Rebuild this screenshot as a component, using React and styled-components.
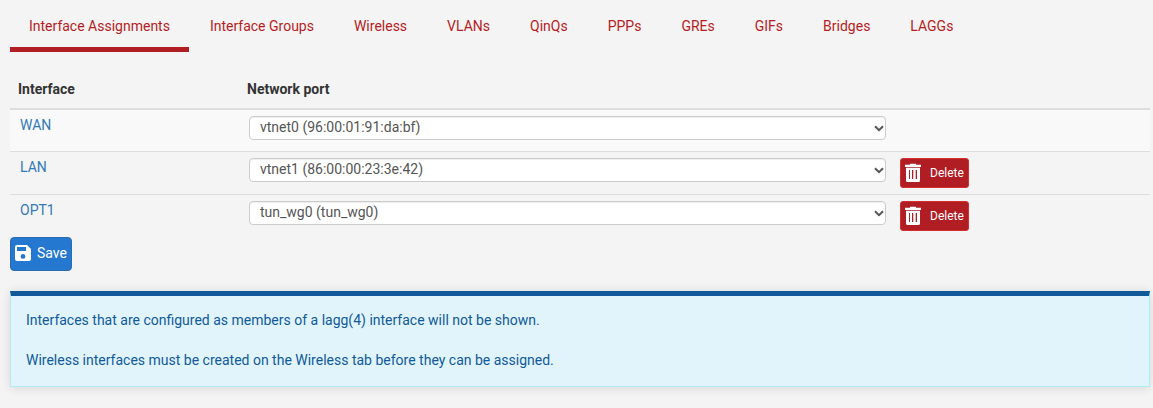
import React from 'react';
import styled, { createGlobalStyle } from 'styled-components';

const Global = createGlobalStyle`
  *, *::before, *::after { box-sizing: border-box; }
  body {
    margin: 0;
    background: #f4f4f4;
    color: #333;
    font: 400 14px/20px Roboto, sans-serif;
  }
`;

const Page = styled.main`
  padding: 0 3px 0 10px;
  height: 408px;
  overflow: hidden;
`;

const Tabs = styled.nav`
  display: flex;
  gap: 2px;
  height: 52px;
`;

const Tab = styled.a`
  padding: 16px 19px 0;
  color: #b71c23;
  white-space: nowrap;
  border-bottom: 5px solid ${(p) => (p.$active ? '#b01d23' : 'transparent')};
`;

const Table = styled.section`
  margin-top: 27px;
`;

const HeadRow = styled.div`
  display: grid;
  grid-template-columns: 229px 1fr;
  height: 31px;
  padding-left: 8px;
  font-weight: 700;
  border-bottom: 2px solid #ddd;
`;

const Row = styled.div`
  display: grid;
  grid-template-columns: 229px 637px auto;
  justify-content: start;
  align-items: start;
  height: ${(p) => p.$height}px;
  padding: 6px 0 0 10px;
  background: ${(p) => (p.$shaded ? '#f9f9f9' : 'transparent')};
  & + & { border-top: 1px solid #ddd; }
`;

const InterfaceLink = styled.a`
  margin-top: -1px;
  color: #337ab7;
`;

const SelectBox = styled.div`
  display: grid;
  grid-template-columns: 1fr 12px;
  align-items: center;
  height: 24px;
`;

const PortSelect = styled.select`
  grid-area: 1 / 1 / 2 / 3;
  width: 100%;
  height: 24px;
  margin: 0;
  padding: 0 20px 2px 10px;
  appearance: none;
  border: 1px solid #ccc;
  border-radius: 4px;
  background: #fff;
  color: #555;
  font: inherit;
  box-shadow: inset 0 1px 1px rgba(0, 0, 0, 0.075);
`;

const Chevron = styled.svg`
  grid-area: 1 / 2 / 2 / 3;
  z-index: 1;
  pointer-events: none;
`;

const Button = styled.button`
  display: flex;
  align-items: center;
  margin: 0;
  border: 1px solid;
  color: #fff;
  font-family: inherit;
`;

const DeleteButton = styled(Button)`
  width: 69px;
  height: 30px;
  margin-left: 14px;
  padding: 0 4px;
  gap: 8px;
  border-color: #d32f2f;
  border-radius: 3px;
  background: #b01d23;
  font-size: 12px;
`;

const SaveButton = styled(Button)`
  width: 62px;
  height: 34px;
  padding: 0 4px 2px;
  gap: 6px;
  border-color: #2a6cad;
  border-radius: 4px;
  background: #2478cf;
  font-size: 14px;
`;

const Notice = styled.aside`
  height: 96px;
  margin-top: 20px;
  padding: 14px 15px;
  border: 1px solid #b2ebf2;
  border-top: 5px solid #105a9a;
  background: #e1f4fc;
  color: #105a9a;
  box-shadow: 0 1px 10px rgba(0, 0, 0, 0.12);
`;

const NoticeText = styled.p`
  margin: 0 0 20px;
`;

const TrashIcon = () => (
  <svg width="17" height="20" viewBox="0 0 17 20" fill="#fff">
    <path d="M5 .8h6v1h5v2.200H0V1.800h5z" />
    <path fillRule="evenodd" d="M1 4.800h14v12.700a1.500 1.500 0 0 1-1.500 1.500h-11A1.500 1.500 0 0 1 1 17.500zM4 7h1v9H4zM7 7h1.300v9H7zM10.700 7H12v9h-1.300z" />
  </svg>
);

const SaveIcon = () => (
  <svg width="16" height="16" viewBox="0 0 16 16" fill="#fff">
    <path fillRule="evenodd" d="M2 0h10l4 4v10a2 2 0 0 1-2 2H2a2 2 0 0 1-2-2V2a2 2 0 0 1 2-2zM2 2v4h9V2zM8 9a2.400 2.400 0 1 0 0 4.800A2.400 2.400 0 0 0 8 9z" />
  </svg>
);

const tabs = ['Interface Assignments', 'Interface Groups', 'Wireless', 'VLANs', 'QinQs', 'PPPs', 'GREs', 'GIFs', 'Bridges', 'LAGGs'];

const rows = [
  { name: 'WAN', port: 'vtnet0 (96:00:01:91:da:bf)', height: 41 },
  { name: 'LAN', port: 'vtnet1 (86:00:00:23:3e:42)', height: 43, removable: true },
  { name: 'OPT1', port: 'tun_wg0 (tun_wg0)', height: 43, removable: true },
];

export default function App() {
  return (
    <Page>
      <Global />
      <Tabs>
        {tabs.map((t, i) => <Tab key={t} $active={i === 0}>{t}</Tab>)}
      </Tabs>
      <Table>
        <HeadRow><span>Interface</span><span>Network port</span></HeadRow>
        {rows.map((r, i) => (
          <Row key={r.name} $height={r.height} $shaded={i === 0}>
            <InterfaceLink>{r.name}</InterfaceLink>
            <SelectBox>
              <PortSelect><option>{r.port}</option></PortSelect>
              <Chevron width="10" height="7" viewBox="0 0 10 7" fill="none" stroke="#555" strokeWidth="2">
                <path d="M1 1.300L5 5.200 9 1.300" />
              </Chevron>
            </SelectBox>
            {r.removable && <DeleteButton><TrashIcon />Delete</DeleteButton>}
          </Row>
        ))}
      </Table>
      <SaveButton><SaveIcon />Save</SaveButton>
      <Notice>
        <NoticeText>Interfaces that are configured as members of a lagg(4) interface will not be shown.</NoticeText>
        <NoticeText>Wireless interfaces must be created on the Wireless tab before they can be assigned.</NoticeText>
      </Notice>
    </Page>
  );
}
